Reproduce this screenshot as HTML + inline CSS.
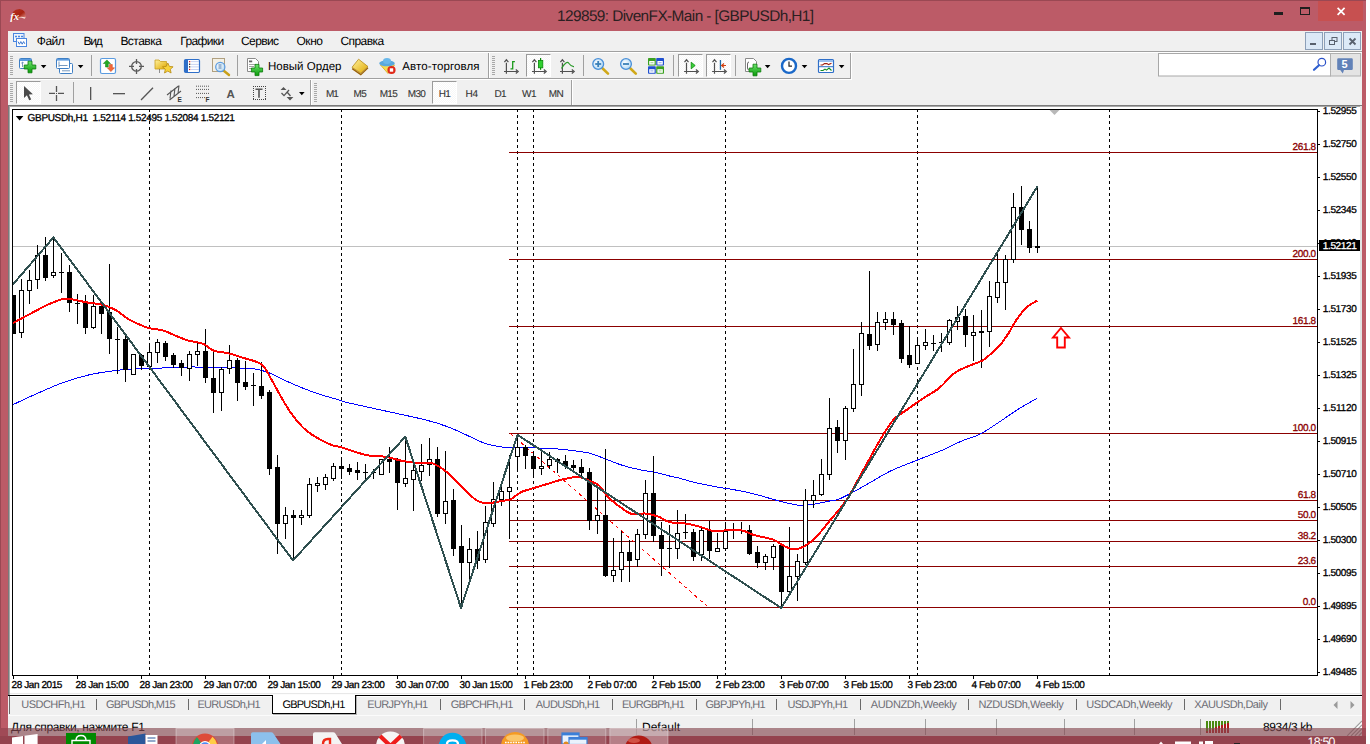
<!DOCTYPE html>
<html><head><meta charset="utf-8"><title>129859: DivenFX-Main - [GBPUSDh,H1]</title>
<style>
html,body{margin:0;padding:0;}
body{width:1370px;height:744px;overflow:hidden;background:#fff;position:relative;font-family:"Liberation Sans",sans-serif;}
.abs,.t,.b{position:absolute;}
.t{white-space:pre;font-family:"Liberation Sans",sans-serif;text-rendering:geometricPrecision;}
.b{box-sizing:border-box;}
</style></head><body>
<!-- window frame -->
<div class="b" style="left:0;top:0;width:1366px;height:744px;background:#bc5b67;"></div>
<div class="b" style="left:0;top:0;width:1366px;height:1px;background:#9a4853;"></div>
<div class="b" style="left:0;top:0;width:1px;height:744px;background:#9a4853;"></div>
<!-- client -->
<div class="b" style="left:8px;top:31px;width:1354px;height:705px;background:#f0f0f0;"></div>
<!-- mdi sunken border + white -->
<div class="b" style="left:8px;top:105px;width:1354px;height:590px;background:#7a7a7a;"></div>
<div class="b" style="left:9px;top:106px;width:1353px;height:589px;background:#a8a8a8;"></div>
<div class="b" style="left:10px;top:107px;width:1350px;height:587px;background:#fff;"></div>
<div class="b" style="left:1360px;top:106px;width:2px;height:589px;background:#e3e3e3;"></div>
<div class="b" style="left:10px;top:694px;width:1350px;height:1px;background:#fff;"></div>
<svg class="abs" style="left:0;top:0" width="1370" height="744" viewBox="0 0 1370 744" shape-rendering="crispEdges">
<rect x="13" y="246" width="1304" height="1" fill="#c0c0c0"/>
<line x1="149.5" y1="109" x2="149.5" y2="675" stroke="#000" stroke-width="1" stroke-dasharray="3,3"/>
<line x1="341.5" y1="109" x2="341.5" y2="675" stroke="#000" stroke-width="1" stroke-dasharray="3,3"/>
<line x1="517.5" y1="109" x2="517.5" y2="675" stroke="#000" stroke-width="1" stroke-dasharray="3,3"/>
<line x1="533.5" y1="109" x2="533.5" y2="675" stroke="#000" stroke-width="1" stroke-dasharray="3,3"/>
<line x1="725.5" y1="109" x2="725.5" y2="675" stroke="#000" stroke-width="1" stroke-dasharray="3,3"/>
<line x1="917.5" y1="109" x2="917.5" y2="675" stroke="#000" stroke-width="1" stroke-dasharray="3,3"/>
<line x1="1109.5" y1="109" x2="1109.5" y2="675" stroke="#000" stroke-width="1" stroke-dasharray="3,3"/>
<rect x="509" y="152" width="808" height="1" fill="#8b0000"/>
<rect x="509" y="259" width="808" height="1" fill="#8b0000"/>
<rect x="509" y="326" width="808" height="1" fill="#8b0000"/>
<rect x="509" y="433" width="808" height="1" fill="#8b0000"/>
<rect x="509" y="500" width="808" height="1" fill="#8b0000"/>
<rect x="509" y="520" width="808" height="1" fill="#8b0000"/>
<rect x="509" y="541" width="808" height="1" fill="#8b0000"/>
<rect x="509" y="566" width="808" height="1" fill="#8b0000"/>
<rect x="509" y="607" width="808" height="1" fill="#8b0000"/>
<line x1="510.5" y1="433.5" x2="707.5" y2="606.5" stroke="#ff0000" stroke-width="1" stroke-dasharray="3.5,3.5" shape-rendering="crispEdges"/>
<path d="M13 404.6 C16.7 402.9 26.8 398.1 35 394.5 C43.2 390.9 53.1 386.2 62 383 C70.9 379.8 79.7 377.1 88.6 375 C97.5 372.9 106.6 371.6 115.5 370.5 C124.4 369.4 133.1 369.1 142 368.6 C150.9 368.2 161.3 368.1 169 367.8 C176.7 367.5 182.0 367.1 188 367 C194.0 366.9 197.5 367.1 205 367.2 C212.5 367.3 224.8 367.6 233 367.9 C241.2 368.2 248.2 368.1 254 368.9 C259.8 369.6 262.8 370.5 268 372.4 C273.2 374.3 279.2 377.9 285 380.5 C290.8 383.1 297.2 385.9 303 388.2 C308.8 390.5 314.2 392.5 320 394.4 C325.8 396.3 333.0 398.2 338 399.7 C343.0 401.2 341.3 401.1 350 403.2 C358.7 405.2 377.3 409.2 390 412 C402.7 414.8 416.4 417.6 426 420 C435.6 422.4 440.8 424.2 447.5 426.7 C454.2 429.2 459.8 432.0 466 434.8 C472.2 437.6 479.2 441.4 485 443.4 C490.8 445.4 495.7 446.2 501 446.9 C506.3 447.6 512.7 447.6 517 447.7 C521.3 447.8 520.9 447.5 527 447.7 C533.1 447.9 545.7 448.2 553.7 448.7 C561.7 449.2 568.8 450.1 575 450.9 C581.2 451.7 585.6 452.1 591 453.6 C596.4 455.1 602.1 457.8 607.5 459.8 C612.9 461.8 618.2 464.1 623.6 465.7 C629.0 467.3 634.3 468.6 639.7 469.7 C645.1 470.8 650.9 471.4 655.8 472.4 C660.7 473.4 665.0 474.9 669 475.9 C673.0 476.9 676.2 477.3 680 478.3 C683.8 479.3 686.4 480.5 692 481.8 C697.6 483.1 706.5 485.0 713.7 486.4 C720.9 487.8 728.3 488.6 735 489.9 C741.7 491.1 747.2 492.2 754 493.9 C760.8 495.6 769.2 498.3 775.5 500 C781.8 501.7 787.2 503.1 791.6 504 C796.0 504.9 797.9 505.4 802 505.4 C806.1 505.4 811.5 504.5 816 503.8 C820.5 503.1 825.0 502.0 829 501.1 C833.0 500.2 834.1 501.2 840 498.7 C845.9 496.1 856.2 490.4 864.5 485.8 C872.8 481.2 881.4 475.5 890 471.3 C898.6 467.1 907.3 464.1 916 460.6 C924.7 457.1 934.5 453.5 942 450.3 C949.5 447.1 954.7 444.0 961 441.3 C967.3 438.6 973.5 437.5 980 434.2 C986.5 430.9 993.5 425.8 1000 421.5 C1006.5 417.2 1012.8 412.6 1019 408.7 C1025.2 404.8 1034.0 400.1 1037 398.4" fill="none" stroke="#0000ff" stroke-width="1" shape-rendering="crispEdges"/>
<rect x="13" y="295" width="3" height="39" fill="#000"/>
<rect x="21" y="279" width="1" height="59" fill="#000"/>
<rect x="19" y="290" width="5" height="43" fill="#000"/>
<rect x="20" y="291" width="3" height="41" fill="#fff"/>
<rect x="29" y="270" width="1" height="34" fill="#000"/>
<rect x="27" y="280" width="5" height="11" fill="#000"/>
<rect x="28" y="281" width="3" height="9" fill="#fff"/>
<rect x="37" y="245" width="1" height="44" fill="#000"/>
<rect x="35" y="255" width="5" height="25" fill="#000"/>
<rect x="36" y="256" width="3" height="23" fill="#fff"/>
<rect x="45" y="237" width="1" height="44" fill="#000"/>
<rect x="43" y="255" width="5" height="23" fill="#000"/>
<rect x="53" y="237" width="1" height="41" fill="#000"/>
<rect x="51" y="272" width="5" height="4" fill="#000"/>
<rect x="52" y="273" width="3" height="2" fill="#fff"/>
<rect x="61" y="253" width="1" height="40" fill="#000"/>
<rect x="59" y="272" width="5" height="1" fill="#000"/>
<rect x="69" y="265" width="1" height="47" fill="#000"/>
<rect x="67" y="272" width="5" height="31" fill="#000"/>
<rect x="77" y="294" width="1" height="30" fill="#000"/>
<rect x="75" y="303" width="5" height="1" fill="#000"/>
<rect x="85" y="295" width="1" height="39" fill="#000"/>
<rect x="83" y="303" width="5" height="25" fill="#000"/>
<rect x="93" y="295" width="1" height="34" fill="#000"/>
<rect x="91" y="306" width="5" height="22" fill="#000"/>
<rect x="92" y="307" width="3" height="20" fill="#fff"/>
<rect x="101" y="303" width="1" height="31" fill="#000"/>
<rect x="99" y="306" width="5" height="8" fill="#000"/>
<rect x="109" y="264" width="1" height="90" fill="#000"/>
<rect x="107" y="312" width="5" height="27" fill="#000"/>
<rect x="117" y="327" width="1" height="47" fill="#000"/>
<rect x="115" y="339" width="5" height="1" fill="#000"/>
<rect x="125" y="336" width="1" height="46" fill="#000"/>
<rect x="123" y="339" width="5" height="31" fill="#000"/>
<rect x="133" y="354" width="1" height="21" fill="#000"/>
<rect x="131" y="354" width="5" height="21" fill="#000"/>
<rect x="132" y="355" width="3" height="19" fill="#fff"/>
<rect x="141" y="354" width="1" height="16" fill="#000"/>
<rect x="139" y="355" width="5" height="11" fill="#000"/>
<rect x="149" y="344" width="1" height="23" fill="#000"/>
<rect x="147" y="352" width="5" height="15" fill="#000"/>
<rect x="148" y="353" width="3" height="13" fill="#fff"/>
<rect x="157" y="339" width="1" height="24" fill="#000"/>
<rect x="155" y="342" width="5" height="11" fill="#000"/>
<rect x="156" y="343" width="3" height="9" fill="#fff"/>
<rect x="165" y="341" width="1" height="20" fill="#000"/>
<rect x="163" y="343" width="5" height="14" fill="#000"/>
<rect x="173" y="353" width="1" height="15" fill="#000"/>
<rect x="171" y="355" width="5" height="10" fill="#000"/>
<rect x="181" y="360" width="1" height="16" fill="#000"/>
<rect x="179" y="363" width="5" height="5" fill="#000"/>
<rect x="189" y="351" width="1" height="30" fill="#000"/>
<rect x="187" y="354" width="5" height="15" fill="#000"/>
<rect x="188" y="355" width="3" height="13" fill="#fff"/>
<rect x="197" y="342" width="1" height="24" fill="#000"/>
<rect x="195" y="351" width="5" height="4" fill="#000"/>
<rect x="196" y="352" width="3" height="2" fill="#fff"/>
<rect x="205" y="329" width="1" height="54" fill="#000"/>
<rect x="203" y="351" width="5" height="27" fill="#000"/>
<rect x="213" y="352" width="1" height="61" fill="#000"/>
<rect x="211" y="378" width="5" height="15" fill="#000"/>
<rect x="221" y="367" width="1" height="44" fill="#000"/>
<rect x="219" y="369" width="5" height="24" fill="#000"/>
<rect x="220" y="370" width="3" height="22" fill="#fff"/>
<rect x="229" y="345" width="1" height="29" fill="#000"/>
<rect x="227" y="360" width="5" height="9" fill="#000"/>
<rect x="228" y="361" width="3" height="7" fill="#fff"/>
<rect x="237" y="358" width="1" height="43" fill="#000"/>
<rect x="235" y="360" width="5" height="23" fill="#000"/>
<rect x="245" y="361" width="1" height="29" fill="#000"/>
<rect x="243" y="382" width="5" height="5" fill="#000"/>
<rect x="253" y="373" width="1" height="33" fill="#000"/>
<rect x="251" y="385" width="5" height="1" fill="#000"/>
<rect x="261" y="362" width="1" height="37" fill="#000"/>
<rect x="259" y="386" width="5" height="10" fill="#000"/>
<rect x="269" y="390" width="1" height="85" fill="#000"/>
<rect x="267" y="392" width="5" height="77" fill="#000"/>
<rect x="277" y="455" width="1" height="99" fill="#000"/>
<rect x="275" y="467" width="5" height="57" fill="#000"/>
<rect x="285" y="507" width="1" height="32" fill="#000"/>
<rect x="283" y="515" width="5" height="9" fill="#000"/>
<rect x="284" y="516" width="3" height="7" fill="#fff"/>
<rect x="293" y="510" width="1" height="50" fill="#000"/>
<rect x="291" y="515" width="5" height="3" fill="#000"/>
<rect x="301" y="510" width="1" height="15" fill="#000"/>
<rect x="299" y="515" width="5" height="3" fill="#000"/>
<rect x="300" y="516" width="3" height="1" fill="#fff"/>
<rect x="309" y="478" width="1" height="40" fill="#000"/>
<rect x="307" y="484" width="5" height="32" fill="#000"/>
<rect x="308" y="485" width="3" height="30" fill="#fff"/>
<rect x="317" y="477" width="1" height="15" fill="#000"/>
<rect x="315" y="483" width="5" height="3" fill="#000"/>
<rect x="316" y="484" width="3" height="1" fill="#fff"/>
<rect x="325" y="474" width="1" height="16" fill="#000"/>
<rect x="323" y="477" width="5" height="8" fill="#000"/>
<rect x="324" y="478" width="3" height="6" fill="#fff"/>
<rect x="333" y="463" width="1" height="18" fill="#000"/>
<rect x="331" y="466" width="5" height="13" fill="#000"/>
<rect x="332" y="467" width="3" height="11" fill="#fff"/>
<rect x="341" y="460" width="1" height="19" fill="#000"/>
<rect x="339" y="466" width="5" height="3" fill="#000"/>
<rect x="349" y="464" width="1" height="11" fill="#000"/>
<rect x="347" y="468" width="5" height="4" fill="#000"/>
<rect x="357" y="462" width="1" height="18" fill="#000"/>
<rect x="355" y="470" width="5" height="3" fill="#000"/>
<rect x="365" y="464" width="1" height="17" fill="#000"/>
<rect x="363" y="472" width="5" height="1" fill="#000"/>
<rect x="373" y="469" width="1" height="10" fill="#000"/>
<rect x="371" y="472" width="5" height="1" fill="#000"/>
<rect x="381" y="459" width="1" height="16" fill="#000"/>
<rect x="379" y="459" width="5" height="16" fill="#000"/>
<rect x="380" y="460" width="3" height="14" fill="#fff"/>
<rect x="389" y="447" width="1" height="26" fill="#000"/>
<rect x="387" y="459" width="5" height="3" fill="#000"/>
<rect x="397" y="458" width="1" height="52" fill="#000"/>
<rect x="395" y="460" width="5" height="23" fill="#000"/>
<rect x="405" y="436" width="1" height="51" fill="#000"/>
<rect x="403" y="478" width="5" height="6" fill="#000"/>
<rect x="404" y="479" width="3" height="4" fill="#fff"/>
<rect x="413" y="460" width="1" height="51" fill="#000"/>
<rect x="411" y="470" width="5" height="10" fill="#000"/>
<rect x="412" y="471" width="3" height="8" fill="#fff"/>
<rect x="421" y="444" width="1" height="37" fill="#000"/>
<rect x="419" y="465" width="5" height="7" fill="#000"/>
<rect x="420" y="466" width="3" height="5" fill="#fff"/>
<rect x="429" y="438" width="1" height="38" fill="#000"/>
<rect x="427" y="459" width="5" height="6" fill="#000"/>
<rect x="428" y="460" width="3" height="4" fill="#fff"/>
<rect x="437" y="447" width="1" height="70" fill="#000"/>
<rect x="435" y="459" width="5" height="55" fill="#000"/>
<rect x="445" y="451" width="1" height="73" fill="#000"/>
<rect x="443" y="501" width="5" height="13" fill="#000"/>
<rect x="444" y="502" width="3" height="11" fill="#fff"/>
<rect x="453" y="489" width="1" height="67" fill="#000"/>
<rect x="451" y="500" width="5" height="49" fill="#000"/>
<rect x="461" y="525" width="1" height="84" fill="#000"/>
<rect x="459" y="546" width="5" height="17" fill="#000"/>
<rect x="469" y="538" width="1" height="44" fill="#000"/>
<rect x="467" y="549" width="5" height="14" fill="#000"/>
<rect x="468" y="550" width="3" height="12" fill="#fff"/>
<rect x="477" y="531" width="1" height="38" fill="#000"/>
<rect x="475" y="549" width="5" height="12" fill="#000"/>
<rect x="485" y="506" width="1" height="57" fill="#000"/>
<rect x="483" y="522" width="5" height="38" fill="#000"/>
<rect x="484" y="523" width="3" height="36" fill="#fff"/>
<rect x="493" y="482" width="1" height="45" fill="#000"/>
<rect x="491" y="499" width="5" height="25" fill="#000"/>
<rect x="492" y="500" width="3" height="23" fill="#fff"/>
<rect x="501" y="484" width="1" height="22" fill="#000"/>
<rect x="499" y="491" width="5" height="9" fill="#000"/>
<rect x="500" y="492" width="3" height="7" fill="#fff"/>
<rect x="509" y="455" width="1" height="84" fill="#000"/>
<rect x="507" y="487" width="5" height="5" fill="#000"/>
<rect x="508" y="488" width="3" height="3" fill="#fff"/>
<rect x="517" y="435" width="1" height="36" fill="#000"/>
<rect x="515" y="447" width="5" height="10" fill="#000"/>
<rect x="516" y="448" width="3" height="8" fill="#fff"/>
<rect x="525" y="445" width="1" height="24" fill="#000"/>
<rect x="523" y="447" width="5" height="9" fill="#000"/>
<rect x="533" y="452" width="1" height="25" fill="#000"/>
<rect x="531" y="456" width="5" height="13" fill="#000"/>
<rect x="541" y="452" width="1" height="23" fill="#000"/>
<rect x="539" y="466" width="5" height="3" fill="#000"/>
<rect x="540" y="467" width="3" height="1" fill="#fff"/>
<rect x="549" y="452" width="1" height="17" fill="#000"/>
<rect x="547" y="459" width="5" height="7" fill="#000"/>
<rect x="548" y="460" width="3" height="5" fill="#fff"/>
<rect x="557" y="458" width="1" height="15" fill="#000"/>
<rect x="555" y="459" width="5" height="3" fill="#000"/>
<rect x="565" y="455" width="1" height="14" fill="#000"/>
<rect x="563" y="461" width="5" height="5" fill="#000"/>
<rect x="573" y="460" width="1" height="12" fill="#000"/>
<rect x="571" y="465" width="5" height="3" fill="#000"/>
<rect x="581" y="459" width="1" height="18" fill="#000"/>
<rect x="579" y="467" width="5" height="6" fill="#000"/>
<rect x="589" y="468" width="1" height="62" fill="#000"/>
<rect x="587" y="472" width="5" height="49" fill="#000"/>
<rect x="597" y="484" width="1" height="50" fill="#000"/>
<rect x="595" y="515" width="5" height="6" fill="#000"/>
<rect x="596" y="516" width="3" height="4" fill="#fff"/>
<rect x="605" y="449" width="1" height="128" fill="#000"/>
<rect x="603" y="515" width="5" height="61" fill="#000"/>
<rect x="613" y="538" width="1" height="44" fill="#000"/>
<rect x="611" y="570" width="5" height="6" fill="#000"/>
<rect x="612" y="571" width="3" height="4" fill="#fff"/>
<rect x="621" y="531" width="1" height="51" fill="#000"/>
<rect x="619" y="552" width="5" height="18" fill="#000"/>
<rect x="620" y="553" width="3" height="16" fill="#fff"/>
<rect x="629" y="540" width="1" height="42" fill="#000"/>
<rect x="627" y="552" width="5" height="9" fill="#000"/>
<rect x="637" y="529" width="1" height="38" fill="#000"/>
<rect x="635" y="534" width="5" height="26" fill="#000"/>
<rect x="636" y="535" width="3" height="24" fill="#fff"/>
<rect x="645" y="480" width="1" height="59" fill="#000"/>
<rect x="643" y="493" width="5" height="42" fill="#000"/>
<rect x="644" y="494" width="3" height="40" fill="#fff"/>
<rect x="653" y="456" width="1" height="86" fill="#000"/>
<rect x="651" y="493" width="5" height="43" fill="#000"/>
<rect x="661" y="522" width="1" height="54" fill="#000"/>
<rect x="659" y="535" width="5" height="14" fill="#000"/>
<rect x="669" y="525" width="1" height="43" fill="#000"/>
<rect x="667" y="548" width="5" height="1" fill="#000"/>
<rect x="677" y="510" width="1" height="49" fill="#000"/>
<rect x="675" y="533" width="5" height="16" fill="#000"/>
<rect x="676" y="534" width="3" height="14" fill="#fff"/>
<rect x="685" y="514" width="1" height="25" fill="#000"/>
<rect x="683" y="532" width="5" height="1" fill="#000"/>
<rect x="693" y="529" width="1" height="32" fill="#000"/>
<rect x="691" y="532" width="5" height="25" fill="#000"/>
<rect x="701" y="526" width="1" height="35" fill="#000"/>
<rect x="699" y="530" width="5" height="25" fill="#000"/>
<rect x="700" y="531" width="3" height="23" fill="#fff"/>
<rect x="709" y="521" width="1" height="38" fill="#000"/>
<rect x="707" y="530" width="5" height="21" fill="#000"/>
<rect x="717" y="533" width="1" height="19" fill="#000"/>
<rect x="715" y="548" width="5" height="4" fill="#000"/>
<rect x="716" y="549" width="3" height="2" fill="#fff"/>
<rect x="725" y="522" width="1" height="29" fill="#000"/>
<rect x="723" y="531" width="5" height="18" fill="#000"/>
<rect x="724" y="532" width="3" height="16" fill="#fff"/>
<rect x="733" y="523" width="1" height="16" fill="#000"/>
<rect x="731" y="530" width="5" height="1" fill="#000"/>
<rect x="741" y="522" width="1" height="12" fill="#000"/>
<rect x="739" y="530" width="5" height="1" fill="#000"/>
<rect x="749" y="525" width="1" height="30" fill="#000"/>
<rect x="747" y="530" width="5" height="24" fill="#000"/>
<rect x="757" y="546" width="1" height="22" fill="#000"/>
<rect x="755" y="552" width="5" height="11" fill="#000"/>
<rect x="765" y="554" width="1" height="16" fill="#000"/>
<rect x="763" y="556" width="5" height="7" fill="#000"/>
<rect x="764" y="557" width="3" height="5" fill="#fff"/>
<rect x="773" y="544" width="1" height="26" fill="#000"/>
<rect x="771" y="546" width="5" height="12" fill="#000"/>
<rect x="772" y="547" width="3" height="10" fill="#fff"/>
<rect x="781" y="544" width="1" height="65" fill="#000"/>
<rect x="779" y="545" width="5" height="47" fill="#000"/>
<rect x="789" y="527" width="1" height="67" fill="#000"/>
<rect x="787" y="576" width="5" height="16" fill="#000"/>
<rect x="788" y="577" width="3" height="14" fill="#fff"/>
<rect x="797" y="554" width="1" height="47" fill="#000"/>
<rect x="795" y="561" width="5" height="16" fill="#000"/>
<rect x="796" y="562" width="3" height="14" fill="#fff"/>
<rect x="805" y="489" width="1" height="76" fill="#000"/>
<rect x="803" y="500" width="5" height="63" fill="#000"/>
<rect x="804" y="501" width="3" height="61" fill="#fff"/>
<rect x="813" y="480" width="1" height="28" fill="#000"/>
<rect x="811" y="495" width="5" height="6" fill="#000"/>
<rect x="812" y="496" width="3" height="4" fill="#fff"/>
<rect x="821" y="459" width="1" height="37" fill="#000"/>
<rect x="819" y="474" width="5" height="21" fill="#000"/>
<rect x="820" y="475" width="3" height="19" fill="#fff"/>
<rect x="829" y="398" width="1" height="82" fill="#000"/>
<rect x="827" y="428" width="5" height="47" fill="#000"/>
<rect x="828" y="429" width="3" height="45" fill="#fff"/>
<rect x="837" y="420" width="1" height="33" fill="#000"/>
<rect x="835" y="427" width="5" height="14" fill="#000"/>
<rect x="845" y="406" width="1" height="54" fill="#000"/>
<rect x="843" y="408" width="5" height="33" fill="#000"/>
<rect x="844" y="409" width="3" height="31" fill="#fff"/>
<rect x="853" y="349" width="1" height="63" fill="#000"/>
<rect x="851" y="384" width="5" height="25" fill="#000"/>
<rect x="852" y="385" width="3" height="23" fill="#fff"/>
<rect x="861" y="322" width="1" height="74" fill="#000"/>
<rect x="859" y="333" width="5" height="52" fill="#000"/>
<rect x="860" y="334" width="3" height="50" fill="#fff"/>
<rect x="869" y="271" width="1" height="79" fill="#000"/>
<rect x="867" y="334" width="5" height="12" fill="#000"/>
<rect x="877" y="312" width="1" height="39" fill="#000"/>
<rect x="875" y="322" width="5" height="23" fill="#000"/>
<rect x="876" y="323" width="3" height="21" fill="#fff"/>
<rect x="885" y="312" width="1" height="18" fill="#000"/>
<rect x="883" y="319" width="5" height="4" fill="#000"/>
<rect x="884" y="320" width="3" height="2" fill="#fff"/>
<rect x="893" y="312" width="1" height="23" fill="#000"/>
<rect x="891" y="319" width="5" height="6" fill="#000"/>
<rect x="901" y="320" width="1" height="43" fill="#000"/>
<rect x="899" y="323" width="5" height="36" fill="#000"/>
<rect x="909" y="326" width="1" height="42" fill="#000"/>
<rect x="907" y="355" width="5" height="10" fill="#000"/>
<rect x="917" y="337" width="1" height="27" fill="#000"/>
<rect x="915" y="345" width="5" height="19" fill="#000"/>
<rect x="916" y="346" width="3" height="17" fill="#fff"/>
<rect x="925" y="329" width="1" height="21" fill="#000"/>
<rect x="923" y="342" width="5" height="4" fill="#000"/>
<rect x="924" y="343" width="3" height="2" fill="#fff"/>
<rect x="933" y="335" width="1" height="16" fill="#000"/>
<rect x="931" y="343" width="5" height="1" fill="#000"/>
<rect x="941" y="333" width="1" height="19" fill="#000"/>
<rect x="939" y="342" width="5" height="1" fill="#000"/>
<rect x="949" y="319" width="1" height="26" fill="#000"/>
<rect x="947" y="320" width="5" height="23" fill="#000"/>
<rect x="948" y="321" width="3" height="21" fill="#fff"/>
<rect x="957" y="306" width="1" height="24" fill="#000"/>
<rect x="955" y="317" width="5" height="5" fill="#000"/>
<rect x="956" y="318" width="3" height="3" fill="#fff"/>
<rect x="965" y="309" width="1" height="38" fill="#000"/>
<rect x="963" y="316" width="5" height="19" fill="#000"/>
<rect x="973" y="315" width="1" height="46" fill="#000"/>
<rect x="971" y="332" width="5" height="4" fill="#000"/>
<rect x="972" y="333" width="3" height="2" fill="#fff"/>
<rect x="981" y="310" width="1" height="58" fill="#000"/>
<rect x="979" y="331" width="5" height="2" fill="#000"/>
<rect x="989" y="281" width="1" height="66" fill="#000"/>
<rect x="987" y="296" width="5" height="36" fill="#000"/>
<rect x="988" y="297" width="3" height="34" fill="#fff"/>
<rect x="997" y="251" width="1" height="52" fill="#000"/>
<rect x="995" y="282" width="5" height="16" fill="#000"/>
<rect x="996" y="283" width="3" height="14" fill="#fff"/>
<rect x="1005" y="255" width="1" height="55" fill="#000"/>
<rect x="1003" y="259" width="5" height="24" fill="#000"/>
<rect x="1004" y="260" width="3" height="22" fill="#fff"/>
<rect x="1013" y="193" width="1" height="70" fill="#000"/>
<rect x="1011" y="207" width="5" height="53" fill="#000"/>
<rect x="1012" y="208" width="3" height="51" fill="#fff"/>
<rect x="1021" y="186" width="1" height="59" fill="#000"/>
<rect x="1019" y="207" width="5" height="23" fill="#000"/>
<rect x="1029" y="221" width="1" height="32" fill="#000"/>
<rect x="1027" y="229" width="5" height="19" fill="#000"/>
<rect x="1037" y="186" width="1" height="67" fill="#000"/>
<rect x="1035" y="246" width="5" height="2" fill="#000"/>
<path d="M13 323 C16.7 321.1 29.2 314.4 35 311.3 C40.8 308.2 43.2 306.7 48 304.6 C52.8 302.5 59.5 299.5 64 298.7 C68.5 297.9 70.8 299.3 75 300 C79.2 300.7 84.5 302.0 89 302.8 C93.5 303.6 97.6 303.4 102 304.6 C106.4 305.8 111.0 307.5 115.5 310 C120.0 312.5 124.6 316.8 129 319.4 C133.4 322.0 138.5 324.1 142 325.6 C145.5 327.1 146.3 327.5 150 328.3 C153.7 329.1 159.8 329.5 164 330.7 C168.2 331.9 171.0 333.9 175 335.5 C179.0 337.1 183.3 339.1 188 340.5 C192.7 341.9 198.7 342.1 203 343.8 C207.3 345.5 209.8 349.2 214 350.8 C218.2 352.4 222.8 351.9 228 353.2 C233.2 354.5 239.4 356.5 245 358.4 C250.6 360.3 257.2 360.9 261.6 364.4 C266.0 367.9 268.0 373.7 271.4 379.4 C274.8 385.1 278.6 392.8 282 398.6 C285.4 404.4 288.2 409.3 292 414.4 C295.8 419.5 300.4 425.1 304.6 429 C308.8 432.9 312.6 435.2 317 437.8 C321.4 440.4 327.2 443.3 331 444.8 C334.8 446.3 335.8 445.7 340 446.9 C344.2 448.1 351.1 450.7 356 452.2 C360.9 453.7 364.7 454.9 369.6 455.7 C374.6 456.5 380.3 455.9 385.7 456.8 C391.1 457.7 396.4 459.8 401.8 460.8 C407.2 461.8 413.1 462.6 418 463 C422.9 463.4 427.0 462.1 431 463 C435.0 463.9 438.3 465.9 442 468.4 C445.7 470.9 449.0 474.0 453 477.8 C457.0 481.6 461.8 487.3 466 491.2 C470.2 495.1 474.3 499.5 478.4 501.4 C482.5 503.3 486.2 502.9 490.5 502.8 C494.8 502.7 500.6 501.2 504 500.6 C507.4 500.0 507.8 500.7 510.7 499.3 C513.6 497.9 517.5 493.9 521.5 492 C525.5 490.1 530.5 489.1 535 487.7 C539.5 486.3 543.9 485.0 548.4 483.7 C552.9 482.4 557.1 480.7 562 479.6 C566.9 478.5 573.5 476.9 578 477 C582.5 477.1 585.1 479.0 588.7 480.5 C592.3 482.0 596.3 483.1 599.4 485.8 C602.5 488.5 604.4 493.3 607.5 496.6 C610.6 499.9 614.0 502.5 618 505.4 C622.0 508.3 627.2 512.6 631.7 514 C636.2 515.4 640.5 513.0 645 513.5 C649.5 514.0 654.5 515.3 658.5 516.7 C662.5 518.1 665.0 520.9 669.3 522 C673.5 523.1 679.3 522.7 684 523.4 C688.7 524.1 692.6 524.7 697.6 526 C702.6 527.3 708.3 530.3 713.7 531 C719.1 531.7 725.1 530.0 730 530 C734.9 530.0 739.0 529.9 743 530.7 C747.0 531.5 749.0 533.5 754 535 C759.0 536.5 768.1 537.8 773 539.6 C777.9 541.4 780.5 544.1 783.6 545.7 C786.7 547.3 788.9 548.5 791.6 549 C794.3 549.5 796.6 549.5 799.7 548.4 C802.9 547.3 807.0 545.0 810.5 542.2 C814.0 539.4 817.4 535.5 821 531.5 C824.6 527.5 828.8 521.8 832 518 C835.2 514.2 837.3 512.2 840 508.7 C842.7 505.2 844.3 503.8 848.4 497 C852.5 490.2 859.1 477.7 864.5 468 C869.9 458.3 875.8 447.1 880.6 439 C885.4 430.9 889.2 424.5 893.5 419.7 C897.8 414.9 901.6 413.5 906.5 410 C911.4 406.5 917.2 402.3 922.6 398.7 C928.0 395.1 933.3 392.7 938.7 388.4 C944.1 384.1 950.0 376.5 954.8 372.9 C959.6 369.2 963.5 368.4 967.7 366.5 C971.9 364.6 977.1 362.9 980 361.6 C982.9 360.3 982.0 361.1 985 358.7 C988.0 356.3 994.2 351.4 998 347.4 C1001.8 343.4 1004.5 339.3 1007.7 334.5 C1010.9 329.7 1014.2 323.0 1017.4 318.4 C1020.6 313.8 1023.7 310.0 1027 307 C1030.3 304.0 1035.7 301.7 1037.4 300.6" fill="none" stroke="#ff0000" stroke-width="2" stroke-linejoin="round" shape-rendering="crispEdges"/>
<path d="M12 285.5 L53.4 237.5 L293 560.5 L405.3 436.7 L461 608 L517.5 434.8 L781.2 608 L1037.4 186.4" fill="none" stroke="#2f4f4f" stroke-width="2" stroke-linejoin="round" shape-rendering="crispEdges"/>
<path d="M1061 328 L1069 337.5 L1064.8 337.5 L1064.8 347.5 L1057.2 347.5 L1057.2 337.5 L1053 337.5 Z" fill="#fff" stroke="#ff0000" stroke-width="1.9" shape-rendering="auto"/>
<rect x="12" y="109" width="1306" height="1" fill="#000"/>
<rect x="12" y="109" width="1" height="567" fill="#000"/>
<rect x="1317" y="109" width="1" height="567" fill="#000"/>
<rect x="12" y="675" width="1306" height="1" fill="#000"/>
<rect x="1318" y="111" width="2" height="1" fill="#000"/>
<rect x="1318" y="144" width="2" height="1" fill="#000"/>
<rect x="1318" y="177" width="2" height="1" fill="#000"/>
<rect x="1318" y="210" width="2" height="1" fill="#000"/>
<rect x="1318" y="243" width="2" height="1" fill="#000"/>
<rect x="1318" y="276" width="2" height="1" fill="#000"/>
<rect x="1318" y="309" width="2" height="1" fill="#000"/>
<rect x="1318" y="342" width="2" height="1" fill="#000"/>
<rect x="1318" y="375" width="2" height="1" fill="#000"/>
<rect x="1318" y="408" width="2" height="1" fill="#000"/>
<rect x="1318" y="441" width="2" height="1" fill="#000"/>
<rect x="1318" y="474" width="2" height="1" fill="#000"/>
<rect x="1318" y="507" width="2" height="1" fill="#000"/>
<rect x="1318" y="540" width="2" height="1" fill="#000"/>
<rect x="1318" y="573" width="2" height="1" fill="#000"/>
<rect x="1318" y="606" width="2" height="1" fill="#000"/>
<rect x="1318" y="639" width="2" height="1" fill="#000"/>
<rect x="1318" y="672" width="2" height="1" fill="#000"/>
<rect x="13" y="676" width="1" height="3" fill="#000"/>
<rect x="77" y="676" width="1" height="3" fill="#000"/>
<rect x="141" y="676" width="1" height="3" fill="#000"/>
<rect x="205" y="676" width="1" height="3" fill="#000"/>
<rect x="269" y="676" width="1" height="3" fill="#000"/>
<rect x="333" y="676" width="1" height="3" fill="#000"/>
<rect x="397" y="676" width="1" height="3" fill="#000"/>
<rect x="461" y="676" width="1" height="3" fill="#000"/>
<rect x="525" y="676" width="1" height="3" fill="#000"/>
<rect x="589" y="676" width="1" height="3" fill="#000"/>
<rect x="653" y="676" width="1" height="3" fill="#000"/>
<rect x="717" y="676" width="1" height="3" fill="#000"/>
<rect x="781" y="676" width="1" height="3" fill="#000"/>
<rect x="845" y="676" width="1" height="3" fill="#000"/>
<rect x="909" y="676" width="1" height="3" fill="#000"/>
<rect x="973" y="676" width="1" height="3" fill="#000"/>
<rect x="1037" y="676" width="1" height="3" fill="#000"/>
<path d="M1049.6 110 L1059.4 110 L1054.5 115 Z" fill="#b8b8b8" shape-rendering="auto"/>
<path d="M15.8 116 L23.4 116 L19.6 120.4 Z" fill="#000" shape-rendering="auto"/>
</svg>
<div class="t" style="left:27.60px;top:114px;font-size:10px;line-height:10px;color:#000;letter-spacing:-0.328px;-webkit-text-stroke:0.3px #000;">GBPUSDh,H1  1.52114 1.52495 1.52084 1.52121</div>
<div class="t" style="left:1322.70px;top:107px;font-size:10px;line-height:10px;color:#000;letter-spacing:-0.322px;-webkit-text-stroke:0.3px #000;">1.52955</div>
<div class="t" style="left:1322.70px;top:140px;font-size:10px;line-height:10px;color:#000;letter-spacing:-0.322px;-webkit-text-stroke:0.3px #000;">1.52750</div>
<div class="t" style="left:1322.70px;top:173px;font-size:10px;line-height:10px;color:#000;letter-spacing:-0.322px;-webkit-text-stroke:0.3px #000;">1.52550</div>
<div class="t" style="left:1322.70px;top:206px;font-size:10px;line-height:10px;color:#000;letter-spacing:-0.322px;-webkit-text-stroke:0.3px #000;">1.52345</div>
<div class="t" style="left:1322.70px;top:239px;font-size:10px;line-height:10px;color:#000;letter-spacing:-0.322px;-webkit-text-stroke:0.3px #000;">1.52140</div>
<div class="t" style="left:1322.70px;top:272px;font-size:10px;line-height:10px;color:#000;letter-spacing:-0.322px;-webkit-text-stroke:0.3px #000;">1.51935</div>
<div class="t" style="left:1322.70px;top:305px;font-size:10px;line-height:10px;color:#000;letter-spacing:-0.322px;-webkit-text-stroke:0.3px #000;">1.51730</div>
<div class="t" style="left:1322.70px;top:338px;font-size:10px;line-height:10px;color:#000;letter-spacing:-0.322px;-webkit-text-stroke:0.3px #000;">1.51525</div>
<div class="t" style="left:1322.70px;top:371px;font-size:10px;line-height:10px;color:#000;letter-spacing:-0.322px;-webkit-text-stroke:0.3px #000;">1.51325</div>
<div class="t" style="left:1322.70px;top:404px;font-size:10px;line-height:10px;color:#000;letter-spacing:-0.215px;-webkit-text-stroke:0.3px #000;">1.51120</div>
<div class="t" style="left:1322.70px;top:437px;font-size:10px;line-height:10px;color:#000;letter-spacing:-0.322px;-webkit-text-stroke:0.3px #000;">1.50915</div>
<div class="t" style="left:1322.70px;top:470px;font-size:10px;line-height:10px;color:#000;letter-spacing:-0.322px;-webkit-text-stroke:0.3px #000;">1.50710</div>
<div class="t" style="left:1322.70px;top:503px;font-size:10px;line-height:10px;color:#000;letter-spacing:-0.322px;-webkit-text-stroke:0.3px #000;">1.50505</div>
<div class="t" style="left:1322.70px;top:536px;font-size:10px;line-height:10px;color:#000;letter-spacing:-0.322px;-webkit-text-stroke:0.3px #000;">1.50300</div>
<div class="t" style="left:1322.70px;top:569px;font-size:10px;line-height:10px;color:#000;letter-spacing:-0.322px;-webkit-text-stroke:0.3px #000;">1.50095</div>
<div class="t" style="left:1322.70px;top:602px;font-size:10px;line-height:10px;color:#000;letter-spacing:-0.322px;-webkit-text-stroke:0.3px #000;">1.49895</div>
<div class="t" style="left:1322.70px;top:635px;font-size:10px;line-height:10px;color:#000;letter-spacing:-0.322px;-webkit-text-stroke:0.3px #000;">1.49690</div>
<div class="t" style="left:1322.70px;top:668px;font-size:10px;line-height:10px;color:#000;letter-spacing:-0.322px;-webkit-text-stroke:0.3px #000;">1.49485</div>
<div class="b" style="left:1319px;top:240px;width:41px;height:11px;background:#000;"></div>
<div class="t" style="left:1322.70px;top:242px;font-size:10px;line-height:10px;color:#fff;letter-spacing:-0.322px;-webkit-text-stroke:0.3px #fff;">1.52121</div>
<div class="t" style="left:1292.52px;top:143px;font-size:10px;line-height:10px;color:#8b0000;letter-spacing:-0.350px;-webkit-text-stroke:0.3px #8b0000;">261.8</div>
<div class="t" style="left:1292.52px;top:250px;font-size:10px;line-height:10px;color:#8b0000;letter-spacing:-0.350px;-webkit-text-stroke:0.3px #8b0000;">200.0</div>
<div class="t" style="left:1292.52px;top:317px;font-size:10px;line-height:10px;color:#8b0000;letter-spacing:-0.350px;-webkit-text-stroke:0.3px #8b0000;">161.8</div>
<div class="t" style="left:1292.52px;top:424px;font-size:10px;line-height:10px;color:#8b0000;letter-spacing:-0.350px;-webkit-text-stroke:0.3px #8b0000;">100.0</div>
<div class="t" style="left:1297.69px;top:491px;font-size:10px;line-height:10px;color:#8b0000;letter-spacing:-0.341px;-webkit-text-stroke:0.3px #8b0000;">61.8</div>
<div class="t" style="left:1297.69px;top:511px;font-size:10px;line-height:10px;color:#8b0000;letter-spacing:-0.341px;-webkit-text-stroke:0.3px #8b0000;">50.0</div>
<div class="t" style="left:1297.69px;top:532px;font-size:10px;line-height:10px;color:#8b0000;letter-spacing:-0.341px;-webkit-text-stroke:0.3px #8b0000;">38.2</div>
<div class="t" style="left:1297.69px;top:557px;font-size:10px;line-height:10px;color:#8b0000;letter-spacing:-0.341px;-webkit-text-stroke:0.3px #8b0000;">23.6</div>
<div class="t" style="left:1302.87px;top:598px;font-size:10px;line-height:10px;color:#8b0000;letter-spacing:-0.324px;-webkit-text-stroke:0.3px #8b0000;">0.0</div>
<div class="t" style="left:11.60px;top:681px;font-size:10px;line-height:10px;color:#000;letter-spacing:-0.425px;-webkit-text-stroke:0.3px #000;">28 Jan 2015</div>
<div class="t" style="left:75.60px;top:681px;font-size:10px;line-height:10px;color:#000;letter-spacing:-0.410px;-webkit-text-stroke:0.3px #000;">28 Jan 15:00</div>
<div class="t" style="left:139.60px;top:681px;font-size:10px;line-height:10px;color:#000;letter-spacing:-0.410px;-webkit-text-stroke:0.3px #000;">28 Jan 23:00</div>
<div class="t" style="left:203.60px;top:681px;font-size:10px;line-height:10px;color:#000;letter-spacing:-0.410px;-webkit-text-stroke:0.3px #000;">29 Jan 07:00</div>
<div class="t" style="left:267.60px;top:681px;font-size:10px;line-height:10px;color:#000;letter-spacing:-0.410px;-webkit-text-stroke:0.3px #000;">29 Jan 15:00</div>
<div class="t" style="left:331.60px;top:681px;font-size:10px;line-height:10px;color:#000;letter-spacing:-0.410px;-webkit-text-stroke:0.3px #000;">29 Jan 23:00</div>
<div class="t" style="left:395.60px;top:681px;font-size:10px;line-height:10px;color:#000;letter-spacing:-0.410px;-webkit-text-stroke:0.3px #000;">30 Jan 07:00</div>
<div class="t" style="left:459.60px;top:681px;font-size:10px;line-height:10px;color:#000;letter-spacing:-0.410px;-webkit-text-stroke:0.3px #000;">30 Jan 15:00</div>
<div class="t" style="left:523.60px;top:681px;font-size:10px;line-height:10px;color:#000;letter-spacing:-0.412px;-webkit-text-stroke:0.3px #000;">1 Feb 23:00</div>
<div class="t" style="left:587.60px;top:681px;font-size:10px;line-height:10px;color:#000;letter-spacing:-0.412px;-webkit-text-stroke:0.3px #000;">2 Feb 07:00</div>
<div class="t" style="left:651.60px;top:681px;font-size:10px;line-height:10px;color:#000;letter-spacing:-0.412px;-webkit-text-stroke:0.3px #000;">2 Feb 15:00</div>
<div class="t" style="left:715.60px;top:681px;font-size:10px;line-height:10px;color:#000;letter-spacing:-0.412px;-webkit-text-stroke:0.3px #000;">2 Feb 23:00</div>
<div class="t" style="left:779.60px;top:681px;font-size:10px;line-height:10px;color:#000;letter-spacing:-0.412px;-webkit-text-stroke:0.3px #000;">3 Feb 07:00</div>
<div class="t" style="left:843.60px;top:681px;font-size:10px;line-height:10px;color:#000;letter-spacing:-0.412px;-webkit-text-stroke:0.3px #000;">3 Feb 15:00</div>
<div class="t" style="left:907.60px;top:681px;font-size:10px;line-height:10px;color:#000;letter-spacing:-0.412px;-webkit-text-stroke:0.3px #000;">3 Feb 23:00</div>
<div class="t" style="left:971.60px;top:681px;font-size:10px;line-height:10px;color:#000;letter-spacing:-0.412px;-webkit-text-stroke:0.3px #000;">4 Feb 07:00</div>
<div class="t" style="left:1035.60px;top:681px;font-size:10px;line-height:10px;color:#000;letter-spacing:-0.412px;-webkit-text-stroke:0.3px #000;">4 Feb 15:00</div>
<div class="t" style="left:557.00px;top:9px;font-size:15.4px;line-height:15.4px;color:#2b1f22;letter-spacing:-0.590px;">129859: DivenFX-Main - [GBPUSDh,H1]</div>
<div class="b" style="left:1318px;top:1px;width:45px;height:20px;background:#c75050;"></div>
<svg class="abs" style="left:1270px;top:0" width="96" height="30" viewBox="0 0 96 30"><rect x="4" y="12" width="9" height="3" fill="#1e1e1e"/><rect x="30.5" y="8.5" width="9" height="6" fill="none" stroke="#1e1e1e" stroke-width="1" shape-rendering="crispEdges"/><rect x="30" y="7" width="10" height="2" fill="#1e1e1e" shape-rendering="crispEdges"/><path d="M67.6 7.8 L74.6 14.8 M74.6 7.8 L67.6 14.8" stroke="#fff" stroke-width="1.7" fill="none"/></svg>
<svg class="abs" style="left:8px;top:6px" width="22" height="20" viewBox="0 0 22 20"><defs><linearGradient id="fxg" x1="0" y1="0" x2="1" y2="1"><stop offset="0" stop-color="#b83220"/><stop offset="0.55" stop-color="#a82414"/><stop offset="1" stop-color="#f0b4b0"/></linearGradient></defs><path d="M3 13.5 Q3 3 11.5 3 Q17.8 3.6 17.8 10.5 Q17.8 12.6 16.4 12.6 Q11 10 6 14.6 Z" fill="url(#fxg)"/><path d="M9 12 Q13 9.6 17.6 11.6 Q17 13 16 12.6 Q12 10.8 9 12 Z" fill="#f6d8d6"/><text x="2.2" y="14.2" font-family="Liberation Serif,serif" font-style="italic" font-weight="bold" font-size="10.5" fill="#fff">fx</text></svg>
<div class="b" style="left:8px;top:51px;width:1354px;height:1px;background:#a0a0a0;"></div>
<div class="b" style="left:8px;top:52px;width:1354px;height:1px;background:#fff;"></div>
<div class="t" style="left:36.80px;top:35px;font-size:12px;line-height:12px;color:#000;letter-spacing:-0.529px;">Файл</div>
<div class="t" style="left:83.50px;top:35px;font-size:12px;line-height:12px;color:#000;letter-spacing:-1.240px;">Вид</div>
<div class="t" style="left:120.40px;top:35px;font-size:12px;line-height:12px;color:#000;letter-spacing:-0.530px;">Вставка</div>
<div class="t" style="left:180.30px;top:35px;font-size:12px;line-height:12px;color:#000;letter-spacing:-0.643px;">Графики</div>
<div class="t" style="left:241.00px;top:35px;font-size:12px;line-height:12px;color:#000;letter-spacing:-0.599px;">Сервис</div>
<div class="t" style="left:296.50px;top:35px;font-size:12px;line-height:12px;color:#000;letter-spacing:-0.473px;">Окно</div>
<div class="t" style="left:340.50px;top:35px;font-size:12px;line-height:12px;color:#000;letter-spacing:-0.583px;">Справка</div>
<svg class="abs" style="left:12px;top:32px" width="18" height="17" viewBox="0 0 18 17"><rect x="1.5" y="1.5" width="10.5" height="8" fill="#eef4fc" stroke="#4a86e0"/><path d="M3 4.5 h2 m1 0 h2 m1 0 h2" stroke="#4a86e0" stroke-width="1.4"/><rect x="4.5" y="6.5" width="10" height="8" fill="#fff" stroke="#4a86e0"/><path d="M6 9.6 l1.4 2.6 l1.4 -2.6 l1.4 2.6 l1.4 -2.6 l1.2 2.2" stroke="#3a76d0" fill="none" stroke-width="1"/></svg>
<div class="b" style="left:1305px;top:32px;width:18px;height:18px;background:#dce9f7;border:1px solid #8c9fb8;"></div>
<div class="b" style="left:1324px;top:32px;width:18px;height:18px;background:#dce9f7;border:1px solid #8c9fb8;"></div>
<div class="b" style="left:1343px;top:32px;width:18px;height:18px;background:#dce9f7;border:1px solid #8c9fb8;"></div>
<svg class="abs" style="left:1305px;top:32px" width="57" height="18" viewBox="0 0 57 18"><rect x="5" y="11" width="6" height="2" fill="#59616e"/><rect x="27" y="5.5" width="5" height="4" fill="none" stroke="#59616e"/><rect x="24.5" y="8.5" width="5" height="4" fill="#dce9f7" stroke="#59616e"/><path d="M44.5 6.5 L50.5 12.5 M50.5 6.5 L44.5 12.5" stroke="#59616e" stroke-width="1.8"/></svg>
<div class="b" style="left:8px;top:78px;width:843px;height:1px;background:#a0a0a0;"></div>
<div class="b" style="left:8px;top:79px;width:844px;height:1px;background:#fff;"></div>
<div class="b" style="left:850px;top:53px;width:1px;height:26px;background:#a0a0a0;"></div>
<div class="b" style="left:851px;top:53px;width:1px;height:27px;background:#fff;"></div>
<div class="b" style="left:488px;top:53px;width:1px;height:25px;background:#a0a0a0;"></div>
<div class="b" style="left:489px;top:53px;width:1px;height:25px;background:#fff;"></div>
<div class="b" style="left:310px;top:80px;width:1px;height:25px;background:#a0a0a0;"></div>
<div class="b" style="left:311px;top:80px;width:1px;height:25px;background:#fff;"></div>
<div class="b" style="left:571px;top:80px;width:1px;height:25px;background:#a0a0a0;"></div>
<div class="b" style="left:572px;top:80px;width:1px;height:25px;background:#fff;"></div>
<div class="b" style="left:16px;top:81px;width:25px;height:23px;background-color:#f7f7f7;background-image:linear-gradient(45deg,#fff 25%,transparent 25%,transparent 75%,#fff 75%),linear-gradient(45deg,#fff 25%,transparent 25%,transparent 75%,#fff 75%);background-size:2px 2px;background-position:0 0,1px 1px;border-top:1px solid #9a9a9a;border-left:1px solid #9a9a9a;border-right:1px solid #fff;border-bottom:1px solid #fff;"></div>
<div class="b" style="left:432px;top:81px;width:25px;height:23px;background-color:#f7f7f7;background-image:linear-gradient(45deg,#fff 25%,transparent 25%,transparent 75%,#fff 75%),linear-gradient(45deg,#fff 25%,transparent 25%,transparent 75%,#fff 75%);background-size:2px 2px;background-position:0 0,1px 1px;border-top:1px solid #9a9a9a;border-left:1px solid #9a9a9a;border-right:1px solid #fff;border-bottom:1px solid #fff;"></div>
<div class="b" style="left:526px;top:54px;width:25px;height:23px;background-color:#f7f7f7;background-image:linear-gradient(45deg,#fff 25%,transparent 25%,transparent 75%,#fff 75%),linear-gradient(45deg,#fff 25%,transparent 25%,transparent 75%,#fff 75%);background-size:2px 2px;background-position:0 0,1px 1px;border-top:1px solid #9a9a9a;border-left:1px solid #9a9a9a;border-right:1px solid #fff;border-bottom:1px solid #fff;"></div>
<div class="b" style="left:678px;top:54px;width:25px;height:23px;background-color:#f7f7f7;background-image:linear-gradient(45deg,#fff 25%,transparent 25%,transparent 75%,#fff 75%),linear-gradient(45deg,#fff 25%,transparent 25%,transparent 75%,#fff 75%);background-size:2px 2px;background-position:0 0,1px 1px;border-top:1px solid #9a9a9a;border-left:1px solid #9a9a9a;border-right:1px solid #fff;border-bottom:1px solid #fff;"></div>
<div class="b" style="left:706px;top:54px;width:25px;height:23px;background-color:#f7f7f7;background-image:linear-gradient(45deg,#fff 25%,transparent 25%,transparent 75%,#fff 75%),linear-gradient(45deg,#fff 25%,transparent 25%,transparent 75%,#fff 75%);background-size:2px 2px;background-position:0 0,1px 1px;border-top:1px solid #9a9a9a;border-left:1px solid #9a9a9a;border-right:1px solid #fff;border-bottom:1px solid #fff;"></div>
<svg class="abs" style="left:0;top:50px" width="1370" height="58" viewBox="0 50 1370 58">
<defs><linearGradient id="gp" x1="0" y1="0" x2="0" y2="1"><stop offset="0" stop-color="#6be36b"/><stop offset="1" stop-color="#0a9a0a"/></linearGradient><linearGradient id="gy" x1="0" y1="0" x2="1" y2="1"><stop offset="0" stop-color="#fff2a0"/><stop offset="1" stop-color="#e0a800"/></linearGradient><radialGradient id="lens" cx="0.4" cy="0.4" r="0.7"><stop offset="0" stop-color="#ffffff"/><stop offset="1" stop-color="#a8d4f4"/></radialGradient></defs>
<rect x="10" y="56" width="3" height="1" fill="#a8a8a8"/>
<rect x="10" y="58" width="3" height="1" fill="#a8a8a8"/>
<rect x="10" y="60" width="3" height="1" fill="#a8a8a8"/>
<rect x="10" y="62" width="3" height="1" fill="#a8a8a8"/>
<rect x="10" y="64" width="3" height="1" fill="#a8a8a8"/>
<rect x="10" y="66" width="3" height="1" fill="#a8a8a8"/>
<rect x="10" y="68" width="3" height="1" fill="#a8a8a8"/>
<rect x="10" y="70" width="3" height="1" fill="#a8a8a8"/>
<rect x="10" y="72" width="3" height="1" fill="#a8a8a8"/>
<rect x="10" y="74" width="3" height="1" fill="#a8a8a8"/>
<rect x="492" y="56" width="3" height="1" fill="#a8a8a8"/>
<rect x="492" y="58" width="3" height="1" fill="#a8a8a8"/>
<rect x="492" y="60" width="3" height="1" fill="#a8a8a8"/>
<rect x="492" y="62" width="3" height="1" fill="#a8a8a8"/>
<rect x="492" y="64" width="3" height="1" fill="#a8a8a8"/>
<rect x="492" y="66" width="3" height="1" fill="#a8a8a8"/>
<rect x="492" y="68" width="3" height="1" fill="#a8a8a8"/>
<rect x="492" y="70" width="3" height="1" fill="#a8a8a8"/>
<rect x="492" y="72" width="3" height="1" fill="#a8a8a8"/>
<rect x="492" y="74" width="3" height="1" fill="#a8a8a8"/>
<rect x="10" y="83" width="3" height="1" fill="#a8a8a8"/>
<rect x="10" y="85" width="3" height="1" fill="#a8a8a8"/>
<rect x="10" y="87" width="3" height="1" fill="#a8a8a8"/>
<rect x="10" y="89" width="3" height="1" fill="#a8a8a8"/>
<rect x="10" y="91" width="3" height="1" fill="#a8a8a8"/>
<rect x="10" y="93" width="3" height="1" fill="#a8a8a8"/>
<rect x="10" y="95" width="3" height="1" fill="#a8a8a8"/>
<rect x="10" y="97" width="3" height="1" fill="#a8a8a8"/>
<rect x="10" y="99" width="3" height="1" fill="#a8a8a8"/>
<rect x="10" y="101" width="3" height="1" fill="#a8a8a8"/>
<rect x="314" y="83" width="3" height="1" fill="#a8a8a8"/>
<rect x="314" y="85" width="3" height="1" fill="#a8a8a8"/>
<rect x="314" y="87" width="3" height="1" fill="#a8a8a8"/>
<rect x="314" y="89" width="3" height="1" fill="#a8a8a8"/>
<rect x="314" y="91" width="3" height="1" fill="#a8a8a8"/>
<rect x="314" y="93" width="3" height="1" fill="#a8a8a8"/>
<rect x="314" y="95" width="3" height="1" fill="#a8a8a8"/>
<rect x="314" y="97" width="3" height="1" fill="#a8a8a8"/>
<rect x="314" y="99" width="3" height="1" fill="#a8a8a8"/>
<rect x="314" y="101" width="3" height="1" fill="#a8a8a8"/>
<rect x="91" y="55" width="1" height="21" fill="#a0a0a0"/>
<rect x="237" y="55" width="1" height="21" fill="#a0a0a0"/>
<rect x="583" y="55" width="1" height="21" fill="#a0a0a0"/>
<rect x="673" y="55" width="1" height="21" fill="#a0a0a0"/>
<rect x="735" y="55" width="1" height="21" fill="#a0a0a0"/>
<rect x="73" y="82" width="1" height="21" fill="#a0a0a0"/>
<rect x="19.5" y="58.5" width="12" height="10" rx="1" fill="#fff" stroke="#3f7fc4"/><rect x="20" y="59" width="11" height="2" fill="#5b9be0"/>
<path d="M22.5 62 v5 M21.3 63.2 l1.2 -1.2 l1.2 1.2" stroke="#6a8fb8" fill="none" stroke-width="0.9"/>
<path d="M28 61.2 h4 v3.8 h3.8 v4 h-3.8 v3.8 h-4 v-3.8 h-3.8 v-4 h3.8 Z" fill="url(#gp)" stroke="#0a7a0a" stroke-width="0.8"/>
<path d="M40.8 65 h5.6 l-2.8 3.2 Z" fill="#000"/>
<rect x="59.5" y="63.5" width="13" height="10" rx="1" fill="#fff" stroke="#3f7fc4"/>
<rect x="56.5" y="58.5" width="13" height="10" rx="1" fill="#fff" stroke="#3f7fc4"/><rect x="57" y="59" width="12" height="1.6" fill="#5b9be0"/>
<path d="M59 61.5 v5.5 M59 65.5 h8.5 M62 70.8 h8" stroke="#6a8fb8" fill="none" stroke-width="0.9"/>
<path d="M77.8 65 h5.6 l-2.8 3.2 Z" fill="#000"/>
<rect x="100.5" y="58.5" width="15" height="15" rx="1.5" fill="#fff" stroke="#5b9be0" stroke-width="1.2"/>
<path d="M105.5 67 v-3.5 h-2.2 l3.6 -3.6 l3.6 3.6 h-2.2 v3.5 Z" fill="#22aa22" stroke="#0f7a0f" stroke-width="0.5"/>
<path d="M109.5 64.5 v3.3 h-2.2 l3.6 3.8 l3.6 -3.8 h-2.2 v-3.3 Z" fill="#f26a3a" stroke="#c83a10" stroke-width="0.5"/>
<circle cx="136.5" cy="66.4" r="4.8" fill="none" stroke="#5a5a5a" stroke-width="1.3"/><path d="M129 66.4 h5 M139 66.4 h5 M136.5 59 v5 M136.5 69 v5" stroke="#5a5a5a" stroke-width="1.3"/>
<path d="M155 60 h4 l1.5 1.5 h6 v7.5 h-11.5 Z" fill="url(#gy)" stroke="#c8a020" stroke-width="0.8"/>
<path d="M167.8 63 l1.6 3.4 l3.7 0.4 l-2.8 2.5 l0.8 3.7 l-3.3 -1.9 l-3.3 1.9 l0.8 -3.7 l-2.8 -2.5 l3.7 -0.4 Z" fill="#f7d23a" stroke="#b88a10" stroke-width="0.8"/>
<path d="M159.5 69.5 v4" stroke="#333" stroke-width="1" stroke-dasharray="1,1"/>
<rect x="184.5" y="59.5" width="15" height="13" rx="1.2" fill="#fff" stroke="#2f6fc8" stroke-width="1.2"/><rect x="185" y="60" width="3" height="12" fill="#2f6fc8"/>
<rect x="189" y="61" width="1.3" height="1.3" fill="#e02020"/><rect x="191" y="61.3" width="8" height="0.8" fill="#b8c8f0"/>
<rect x="189" y="63.6" width="1.3" height="1.3" fill="#222"/><rect x="191" y="63.9" width="8" height="0.8" fill="#b8c8f0"/>
<rect x="189" y="66.2" width="1.3" height="1.3" fill="#222"/><rect x="191" y="66.5" width="8" height="0.8" fill="#b8c8f0"/>
<rect x="189" y="68.8" width="1.3" height="1.3" fill="#e02020"/><rect x="191" y="69.1" width="8" height="0.8" fill="#b8c8f0"/>
<rect x="212.5" y="58.5" width="12" height="13" fill="#f4f0e4" stroke="#b0a080"/>
<path d="M223.5 70.5 l5.5 4.5" stroke="#c8a018" stroke-width="2.4" stroke-linecap="round"/>
<circle cx="220.3" cy="67" r="4.6" fill="url(#lens)" stroke="#5b9be0" stroke-width="1.2" fill-opacity="0.9"/><rect x="218.5" y="64" width="3" height="5" fill="#8aa8c8" opacity="0.8"/>
<path d="M247.5 58.5 h8 l3 3 v10 h-11 Z" fill="#fff" stroke="#8a8a8a"/><rect x="249" y="60.5" width="3.2" height="1.8" fill="#666"/><path d="M249 64.5 h7 M249 66.5 h5 M249 68.5 h3" stroke="#999" stroke-width="0.9"/>
<path d="M255 64.4 h4 v3.6 h3.6 v4 h-3.6 v3.6 h-4 v-3.6 h-3.6 v-4 h3.6 Z" fill="url(#gp)" stroke="#0a7a0a" stroke-width="0.8"/>
<path d="M352 67.3 L358.6 59.2 L368 66.6 L360.8 73.2 Z" fill="url(#gy)" stroke="#b88a18" stroke-width="0.8"/><path d="M352.2 68.6 L360.8 74.6 L368 67.8" fill="none" stroke="#9a6208" stroke-width="1.3"/>
<path d="M380.5 65 q6.5 -3.5 14 0 l-6.5 8.5 Z" fill="#f7dc50" stroke="#d0a010" stroke-width="0.7"/>
<ellipse cx="387" cy="63.3" rx="7.8" ry="3" fill="#5aa8dc"/><ellipse cx="387" cy="61" rx="4" ry="3" fill="#6ab8ea"/>
<circle cx="391.5" cy="70" r="4.1" fill="#e02818"/><rect x="389.8" y="68.3" width="3.4" height="3.4" fill="#fff"/>
<path d="M506.4 73.7 v-11 M504.4 62.2 l2 -2.4 l2 2.4 M504 71.5 h13 M515.8 69.5 l2.4 2 l-2.4 2" stroke="#505050" stroke-width="1.2" fill="none"/>
<path d="M510.5 68.8 h2.2 v-7.2 h2.2" stroke="#1a9a1a" stroke-width="1.3" fill="none"/>
<path d="M534.4 73.7 v-11 M532.4 62.2 l2 -2.4 l2 2.4 M532 71.5 h13 M543.8 69.5 l2.4 2 l-2.4 2" stroke="#505050" stroke-width="1.2" fill="none"/>
<rect x="540" y="58" width="1.2" height="11.8" fill="#0a8a0a"/><rect x="538.4" y="60.4" width="4.4" height="7.4" fill="#2fd02f" stroke="#0a8a0a" stroke-width="0.8"/>
<path d="M562.4 73.7 v-11 M560.4 62.2 l2 -2.4 l2 2.4 M560 71.5 h13 M571.8 69.5 l2.4 2 l-2.4 2" stroke="#505050" stroke-width="1.2" fill="none"/>
<path d="M561.5 68.5 q5 -8.5 7.5 -5 t5 3.2" stroke="#2a9a2a" stroke-width="1.2" fill="none"/>
<path d="M602.4 68.2 l5.6 5.4" stroke="#d0a818" stroke-width="2.6" stroke-linecap="round"/>
<circle cx="598.2" cy="64" r="5.4" fill="url(#lens)" stroke="#4a90d8" stroke-width="1.3"/>
<path d="M595.2 64 h6" stroke="#3a80b8" stroke-width="1.8"/>
<path d="M598.2 61 v6" stroke="#3a80b8" stroke-width="1.8"/>
<path d="M630.2 68.2 l5.6 5.4" stroke="#d0a818" stroke-width="2.6" stroke-linecap="round"/>
<circle cx="626" cy="64" r="5.4" fill="url(#lens)" stroke="#4a90d8" stroke-width="1.3"/>
<path d="M623 64 h6" stroke="#3a80b8" stroke-width="1.8"/>
<rect x="648" y="58" width="7.8" height="7.6" rx="0.8" fill="#3aa020"/><rect x="649.2" y="61" width="5.4" height="3.6" fill="#fff"/><rect x="650.4" y="62.2" width="3" height="1" fill="#3aa020" opacity="0.5"/>
<rect x="656.2" y="58" width="7.8" height="7.6" rx="0.8" fill="#2050d0"/><rect x="657.4" y="61" width="5.4" height="3.6" fill="#fff"/><rect x="658.6" y="62.2" width="3" height="1" fill="#2050d0" opacity="0.5"/>
<rect x="648" y="66.2" width="7.8" height="7.6" rx="0.8" fill="#2050d0"/><rect x="649.2" y="69.2" width="5.4" height="3.6" fill="#fff"/><rect x="650.4" y="70.4" width="3" height="1" fill="#2050d0" opacity="0.5"/>
<rect x="656.2" y="66.2" width="7.8" height="7.6" rx="0.8" fill="#3aa020"/><rect x="657.4" y="69.2" width="5.4" height="3.6" fill="#fff"/><rect x="658.6" y="70.4" width="3" height="1" fill="#3aa020" opacity="0.5"/>
<path d="M686.5 73.7 v-11 M684.5 62.2 l2 -2.4 l2 2.4 M684.1 71.5 h13 M695.9 69.5 l2.4 2 l-2.4 2" stroke="#505050" stroke-width="1.2" fill="none"/>
<path d="M691.2 62.2 l4 3.3 l-4 3.3 Z" fill="#38d038" stroke="#0a8a0a" stroke-width="0.8"/>
<path d="M714.5 73.7 v-11 M712.5 62.2 l2 -2.4 l2 2.4 M712.1 71.5 h13 M723.9 69.5 l2.4 2 l-2.4 2" stroke="#505050" stroke-width="1.2" fill="none"/>
<rect x="719.8" y="60" width="1.3" height="9.8" fill="#1a6aa8"/><path d="M726 65.5 h-4 M724 63.5 l-2.4 2 l2.4 2" stroke="#d04010" stroke-width="1.2" fill="none"/>
<path d="M745.5 58.5 h8 l3 3 v10 h-11 Z" fill="#fff" stroke="#8a8a8a"/><path d="M749 62 q-1.5 0 -1.5 2 v4 q0 2 1.5 2" stroke="#555" fill="none" stroke-width="0.9"/>
<path d="M753 64.2 h4 v3.8 h3.8 v4 h-3.8 v3.8 h-4 v-3.8 h-3.8 v-4 h3.8 Z" fill="url(#gp)" stroke="#0a7a0a" stroke-width="0.8"/>
<path d="M764.8 65 h5.6 l-2.8 3.2 Z" fill="#000"/>
<circle cx="789" cy="65.9" r="7" fill="#fff" stroke="#1a68c8" stroke-width="2.4"/><path d="M789 61.5 v4.6 h3" stroke="#222" stroke-width="1.2" fill="none"/>
<path d="M801.7 65 h5.6 l-2.8 3.2 Z" fill="#000"/>
<rect x="818.5" y="59.5" width="15" height="13" rx="1" fill="#fff" stroke="#2f6fc8" stroke-width="1.2"/><rect x="819" y="60" width="14" height="2" fill="#9cc0ee"/><rect x="819" y="66.2" width="14" height="1" fill="#2f6fc8"/>
<path d="M820.5 65 h2 l2 -1.4 h2.5 l1.5 1 l3 -1.4" stroke="#a02010" stroke-width="1.1" fill="none"/><path d="M820.5 70.5 h2.5 l2 -1.4 l1.5 1 l2.5 -2 l2.5 2.4" stroke="#108a20" stroke-width="1.1" fill="none"/>
<path d="M838.8 65 h5.6 l-2.8 3.2 Z" fill="#000"/>
<path d="M24 86 v12 l2.9 -2.7 l2.3 5 l2 -0.9 l-2.3 -4.9 l4 -0.3 Z" fill="#4a4a4a"/>
<path d="M49 93.4 h6 M58 93.4 h6 M56.5 86 v6 M56.5 95 v6" stroke="#555" stroke-width="1.3"/><rect x="56" y="93" width="1" height="1" fill="#555"/>
<rect x="90" y="87" width="1.3" height="13" fill="#555"/>
<rect x="113" y="93" width="12" height="1.3" fill="#555"/>
<path d="M141 100 L153 87.8" stroke="#555" stroke-width="1.3"/>
<path d="M167 95 L178.5 86 M169.5 100 L181 91 M171 90.5 l-1 8 M175 88 l-1 8 M179 85.5 l-1 8" stroke="#555" stroke-width="1.1" fill="none"/>
<text x="177.6" y="101.8" font-family="Liberation Sans,sans-serif" font-weight="bold" font-size="6.5" fill="#333">E</text>
<path d="M196 86.2 h13.5" stroke="#555" stroke-width="1" stroke-dasharray="1,1"/>
<path d="M196 89.4 h13.5" stroke="#555" stroke-width="1" stroke-dasharray="1,1"/>
<path d="M196 93.4 h13.5" stroke="#555" stroke-width="1" stroke-dasharray="1,1"/>
<path d="M196 97.6 h9" stroke="#555" stroke-width="1" stroke-dasharray="1,1"/>
<text x="205.6" y="101.8" font-family="Liberation Sans,sans-serif" font-weight="bold" font-size="6.5" fill="#333">F</text>
<text x="226.4" y="97.8" font-family="Liberation Sans,sans-serif" font-weight="bold" font-size="11.5" fill="#555">A</text>
<path d="M253 86.5 h13 M253 99.5 h13 M253.5 86 v14 M265.5 86 v14" fill="none" stroke="#444" stroke-width="1" stroke-dasharray="1,1" shape-rendering="crispEdges"/><path d="M255.5 89.3 h7 M259 89.3 v8.5" stroke="#555" stroke-width="1.6"/>
<path d="M283.5 87 l3 3 l-3 0 l-3 0 Z M290 100.5 l-3.4 -3.4 h6.8 Z" fill="#555"/><path d="M281.5 93 l2.5 2.6 l5 -5.6 M287 92 l3.5 4" stroke="#555" stroke-width="1.3" fill="none"/>
<path d="M299 92 h5.6 l-2.8 3.2 Z" fill="#000"/>
<rect x="1158.5" y="53.5" width="172" height="22.5" fill="#fff" stroke="#a8a8a8"/>
<rect x="1330.5" y="53.5" width="30" height="22.5" fill="#e4e4e4" stroke="#b0b0b0"/>
<circle cx="1321.8" cy="62.2" r="3.8" fill="#fff" stroke="#2a50c8" stroke-width="1.2"/><path d="M1319 65.2 l-5 4.6" stroke="#3060d0" stroke-width="2.2" stroke-linecap="round"/>
<path d="M1338.4 58.2 h13.2 q1.2 0 1.2 1.2 v9.3 q0 1.2 -1.2 1.2 h-7.6 l-1.2 3.6 l-2.6 -3.6 h-1.8 q-1.2 0 -1.2 -1.2 v-9.3 q0 -1.2 1.2 -1.2 Z" fill="#6282b8"/>
<text x="1341.6" y="68" font-family="Liberation Sans,sans-serif" font-weight="bold" font-size="11" fill="#fff">5</text>
</svg>
<div class="t" style="left:267.90px;top:62px;font-size:11.5px;line-height:11.5px;color:#000;letter-spacing:0.029px;">Новый Ордер</div>
<div class="t" style="left:402.20px;top:62px;font-size:11.5px;line-height:11.5px;color:#000;letter-spacing:0.111px;">Авто-торговля</div>
<div class="t" style="left:325.90px;top:90px;font-size:10px;line-height:10px;color:#333;letter-spacing:-0.903px;-webkit-text-stroke:0.1px #333;">M1</div>
<div class="t" style="left:353.60px;top:90px;font-size:10px;line-height:10px;color:#333;letter-spacing:-0.753px;-webkit-text-stroke:0.1px #333;">M5</div>
<div class="t" style="left:379.70px;top:90px;font-size:10px;line-height:10px;color:#333;letter-spacing:-0.718px;-webkit-text-stroke:0.1px #333;">M15</div>
<div class="t" style="left:407.80px;top:90px;font-size:10px;line-height:10px;color:#333;letter-spacing:-0.751px;-webkit-text-stroke:0.1px #333;">M30</div>
<div class="t" style="left:438.80px;top:90px;font-size:10px;line-height:10px;color:#333;letter-spacing:-0.798px;-webkit-text-stroke:0.1px #333;">H1</div>
<div class="t" style="left:465.60px;top:90px;font-size:10px;line-height:10px;color:#333;letter-spacing:-0.248px;-webkit-text-stroke:0.1px #333;">H4</div>
<div class="t" style="left:494.50px;top:90px;font-size:10px;line-height:10px;color:#333;letter-spacing:-0.648px;-webkit-text-stroke:0.1px #333;">D1</div>
<div class="t" style="left:522.00px;top:90px;font-size:10px;line-height:10px;color:#333;letter-spacing:-0.500px;-webkit-text-stroke:0.1px #333;">W1</div>
<div class="t" style="left:548.70px;top:90px;font-size:10px;line-height:10px;color:#333;letter-spacing:-0.481px;-webkit-text-stroke:0.1px #333;">MN</div>
<div class="b" style="left:10px;top:693px;width:1350px;height:1px;background:#e8e8e8;"></div>
<div class="b" style="left:10px;top:694px;width:1350px;height:1px;background:#fcfcfc;"></div>
<div class="b" style="left:8px;top:695px;width:1354px;height:1px;background:#000;"></div>
<div class="b" style="left:10px;top:696px;width:1352px;height:1px;background:#fff;"></div>
<div class="b" style="left:9px;top:696px;width:1px;height:18px;background:#6a6a6a;"></div>
<div class="b" style="left:8px;top:715px;width:1354px;height:1px;background:#fbfbfb;"></div>
<div class="b" style="left:273px;top:696px;width:84px;height:19px;background:#b4b4b4;"></div>
<div class="b" style="left:272px;top:695px;width:84px;height:19px;background:#fff;border:1px solid #000;border-top:none;"></div>
<div class="t" style="left:21.30px;top:700px;font-size:11px;line-height:11px;color:#6c6c74;letter-spacing:-0.538px;">USDCHFh,H1</div>
<div class="t" style="left:106.00px;top:700px;font-size:11px;line-height:11px;color:#6c6c74;letter-spacing:-0.730px;">GBPUSDh,M15</div>
<div class="t" style="left:197.50px;top:700px;font-size:11px;line-height:11px;color:#6c6c74;letter-spacing:-0.719px;">EURUSDh,H1</div>
<div class="t" style="left:367.30px;top:700px;font-size:11px;line-height:11px;color:#6c6c74;letter-spacing:-0.634px;">EURJPYh,H1</div>
<div class="t" style="left:450.70px;top:700px;font-size:11px;line-height:11px;color:#6c6c74;letter-spacing:-0.698px;">GBPCHFh,H1</div>
<div class="t" style="left:535.80px;top:700px;font-size:11px;line-height:11px;color:#6c6c74;letter-spacing:-0.589px;">AUDUSDh,H1</div>
<div class="t" style="left:622.00px;top:700px;font-size:11px;line-height:11px;color:#6c6c74;letter-spacing:-0.770px;">EURGBPh,H1</div>
<div class="t" style="left:705.50px;top:700px;font-size:11px;line-height:11px;color:#6c6c74;letter-spacing:-0.724px;">GBPJPYh,H1</div>
<div class="t" style="left:787.40px;top:700px;font-size:11px;line-height:11px;color:#6c6c74;letter-spacing:-0.654px;">USDJPYh,H1</div>
<div class="t" style="left:870.80px;top:700px;font-size:11px;line-height:11px;color:#6c6c74;letter-spacing:-0.377px;">AUDNZDh,Weekly</div>
<div class="t" style="left:978.40px;top:700px;font-size:11px;line-height:11px;color:#6c6c74;letter-spacing:-0.427px;">NZDUSDh,Weekly</div>
<div class="t" style="left:1086.30px;top:700px;font-size:11px;line-height:11px;color:#6c6c74;letter-spacing:-0.400px;">USDCADh,Weekly</div>
<div class="t" style="left:1194.30px;top:700px;font-size:11px;line-height:11px;color:#6c6c74;letter-spacing:-0.490px;">XAUUSDh,Daily</div>
<div class="t" style="left:282.40px;top:700px;font-size:11px;line-height:11px;color:#000;letter-spacing:-0.750px;">GBPUSDh,H1</div>
<div class="b" style="left:96px;top:699px;width:1px;height:11px;background:#6a6a6a;"></div>
<div class="b" style="left:188px;top:699px;width:1px;height:11px;background:#6a6a6a;"></div>
<div class="b" style="left:440px;top:699px;width:1px;height:11px;background:#6a6a6a;"></div>
<div class="b" style="left:524px;top:699px;width:1px;height:11px;background:#6a6a6a;"></div>
<div class="b" style="left:612px;top:699px;width:1px;height:11px;background:#6a6a6a;"></div>
<div class="b" style="left:696px;top:699px;width:1px;height:11px;background:#6a6a6a;"></div>
<div class="b" style="left:776px;top:699px;width:1px;height:11px;background:#6a6a6a;"></div>
<div class="b" style="left:860px;top:699px;width:1px;height:11px;background:#6a6a6a;"></div>
<div class="b" style="left:968px;top:699px;width:1px;height:11px;background:#6a6a6a;"></div>
<div class="b" style="left:1076px;top:699px;width:1px;height:11px;background:#6a6a6a;"></div>
<div class="b" style="left:1184px;top:699px;width:1px;height:11px;background:#6a6a6a;"></div>
<div class="b" style="left:1280px;top:699px;width:1px;height:11px;background:#6a6a6a;"></div>
<svg class="abs" style="left:1330px;top:698px" width="30" height="14" viewBox="0 0 30 14"><path d="M7.5 3 v8 l-4 -4 Z M20.5 3 v8 l4 -4 Z" fill="#9a9a9a"/></svg>
<div class="t" style="left:11.00px;top:721px;font-size:12px;line-height:12px;color:#000;letter-spacing:-0.346px;">Для справки, нажмите F1</div>
<div class="t" style="left:642.00px;top:721px;font-size:12px;line-height:12px;color:#000;letter-spacing:-0.004px;">Default</div>
<div class="t" style="left:1263.00px;top:721px;font-size:12px;line-height:12px;color:#000;letter-spacing:-0.413px;">8934/3 kb</div>
<div class="b" style="left:636px;top:719px;width:1px;height:16px;background:#a0a0a0;"></div>
<div class="b" style="left:752px;top:719px;width:1px;height:16px;background:#a0a0a0;"></div>
<div class="b" style="left:854px;top:719px;width:1px;height:16px;background:#a0a0a0;"></div>
<div class="b" style="left:925px;top:719px;width:1px;height:16px;background:#a0a0a0;"></div>
<div class="b" style="left:996px;top:719px;width:1px;height:16px;background:#a0a0a0;"></div>
<div class="b" style="left:1064px;top:719px;width:1px;height:16px;background:#a0a0a0;"></div>
<div class="b" style="left:1134px;top:719px;width:1px;height:16px;background:#a0a0a0;"></div>
<div class="b" style="left:1200px;top:719px;width:1px;height:16px;background:#a0a0a0;"></div>
<svg class="abs" style="left:1205px;top:720px" width="26" height="14" viewBox="0 0 26 14" shape-rendering="crispEdges"><rect x="1" y="1" width="2" height="12" fill="#b01818"/><rect x="1" y="1" width="2" height="10" fill="#4a8a10"/><rect x="4" y="1" width="2" height="12" fill="#b01818"/><rect x="4" y="1" width="2" height="8.8" fill="#4a8a10"/><rect x="7" y="1" width="2" height="12" fill="#b01818"/><rect x="7" y="1" width="2" height="7.6" fill="#4a8a10"/><rect x="10" y="1" width="2" height="12" fill="#b01818"/><rect x="10" y="1" width="2" height="6.4" fill="#4a8a10"/><rect x="13" y="1" width="2" height="12" fill="#b01818"/><rect x="13" y="1" width="2" height="5.2" fill="#4a8a10"/><rect x="16" y="1" width="2" height="12" fill="#b01818"/><rect x="16" y="1" width="2" height="4" fill="#4a8a10"/><rect x="19" y="1" width="2" height="12" fill="#b01818"/><rect x="19" y="1" width="2" height="2.8" fill="#4a8a10"/><rect x="22" y="1" width="2" height="12" fill="#b01818"/><rect x="22" y="1" width="2" height="1.6" fill="#4a8a10"/><path d="M0 13 L0 14 L26 14 L26 0 Z" fill="none"/></svg>
<svg class="abs" style="left:1344px;top:720px" width="18" height="16" viewBox="0 0 18 16"><path d="M18 2.6 L4.8 15.8 M18 6.5 L8.7 15.8 M18 10.3 L12.5 15.8 M18 14.2 L16.4 15.8" stroke="#fff" stroke-width="1.5"/><path d="M18 1 L3.2 15.8 M18 4.9 L7.1 15.8 M18 8.7 L10.9 15.8 M18 12.5 L14.7 15.8" stroke="#9c9c9c" stroke-width="1.2"/></svg>
<div class="b" style="left:8px;top:728px;width:1354px;height:8px;background:rgba(134,74,82,0.65);"></div>
<div class="b" style="left:0;top:728px;width:8px;height:8px;background:#a04a56;"></div>
<div class="b" style="left:1362px;top:728px;width:4px;height:8px;background:#a04a56;"></div>
<div class="b" style="left:0;top:736px;width:1366px;height:8px;background:#94434e;"></div>
<svg class="abs" style="left:0;top:728px" width="1366" height="16" viewBox="0 728 1366 16"><rect x="176" y="728.5" width="58" height="16" fill="#fff" fill-opacity="0.22" stroke="#fff" stroke-opacity="0.35" stroke-width="1"/><rect x="423.6" y="728.5" width="58.4" height="16" fill="#fff" fill-opacity="0.14" stroke="#fff" stroke-opacity="0.35" stroke-width="1"/><rect x="485.4" y="728.5" width="58.6" height="16" fill="#fff" fill-opacity="0.14" stroke="#fff" stroke-opacity="0.35" stroke-width="1"/><rect x="547.8" y="728.5" width="58" height="16" fill="#fff" fill-opacity="0.14" stroke="#fff" stroke-opacity="0.35" stroke-width="1"/><rect x="609.8" y="728.5" width="58.2" height="16" fill="#fff" fill-opacity="0.32" stroke="#fff" stroke-opacity="0.35" stroke-width="1"/><path d="M12 737.6 L23 736 L23 744 L12 744 Z M24.5 735.8 L37.6 734 L37.6 744 L24.5 744 Z" fill="#fff"/><rect x="66" y="733" width="30" height="11" fill="#008a00"/><path d="M72 744 v-3.5 h18 v3.5 M76 740.5 q0 -5 5 -5 q5 0 5 5" stroke="#fff" stroke-width="1.4" fill="none"/><path d="M128 736.6 L145.5 733.5 L145.5 744 L128 744 Z" fill="#2b579a"/><rect x="145.5" y="735" width="12" height="9" fill="#fff"/><path d="M147.5 738 h8 M147.5 741 h8" stroke="#2b579a" stroke-width="1.2"/><circle cx="205" cy="747" r="13.4" fill="#dd4b39"/><path d="M193 744 a13.4 13.4 0 0 1 4 -7 l5 7 Z" fill="#1da462"/><path d="M217 744 a13.4 13.4 0 0 0 -4.5 -7.2 l-5.5 7.2 Z" fill="#ffcd46"/><circle cx="205" cy="747" r="6" fill="#fff"/><circle cx="205" cy="747" r="4.8" fill="#4c8bf5"/><path d="M251 744 V734 q0 -1.8 1.8 -1.8 H271 q1.6 0 2.4 1.4 L280.5 744 Z" fill="#8cc0ec"/><path d="M262 744 l4 -4 v4 Z" fill="#fff"/><path d="M313 744 V734 q0 -1.8 1.8 -1.8 H333 q1.6 0 2.4 1.4 L342 744 Z" fill="#f4f4f4"/><path d="M323 744 q0 -5 5 -5 h2 v5" stroke="#ee2a1a" stroke-width="2.4" fill="none"/><circle cx="390.5" cy="746" r="14.4" fill="#f6f6f6"/><path d="M380 736 L390.5 746 L401 736" stroke="#ee1c1c" stroke-width="4.2" fill="none"/><circle cx="452.5" cy="746.8" r="14" fill="#00aff0"/><path d="M447 744 q0 -3.6 5.5 -3.6 q5.5 0 5.5 3.6" stroke="#fff" stroke-width="2.4" fill="none"/><circle cx="515" cy="746" r="14" fill="#f59a23"/><ellipse cx="515" cy="738" rx="9" ry="3.4" fill="#fbc66a"/><path d="M505 742.5 h20" stroke="#fff" stroke-width="1.6" stroke-dasharray="1.6,1"/><rect x="562" y="733" width="17" height="11" fill="#eaf2fc" stroke="#3a7fd8" stroke-width="1.2"/><rect x="562" y="733" width="17" height="2.4" fill="#3a7fd8"/><rect x="569" y="737.5" width="18" height="7" fill="#eaf2fc" stroke="#3a7fd8" stroke-width="1.2"/><rect x="569" y="737.5" width="18" height="2.2" fill="#3a7fd8"/><circle cx="566" cy="744" r="2.6" fill="#e08a20"/><circle cx="638.7" cy="749.5" r="14" fill="#b01a14"/><ellipse cx="634" cy="740.5" rx="6" ry="2.6" fill="#e06a5a" opacity="0.7"/><path d="M1159 744 l2 -2.5 l2 2.5 Z" fill="#fff"/><rect x="1175" y="741.5" width="16" height="3" fill="#fff"/><rect x="1199" y="741.5" width="4" height="3" fill="#fff"/><rect x="1205" y="741" width="8" height="3" fill="#fff"/><rect x="1234" y="743" width="6" height="1" fill="#222"/></svg>
<div class="t" style="left:1307.60px;top:736px;font-size:12.4px;line-height:12.4px;color:#fff;letter-spacing:-0.803px;">18:50</div>
</body></html>
